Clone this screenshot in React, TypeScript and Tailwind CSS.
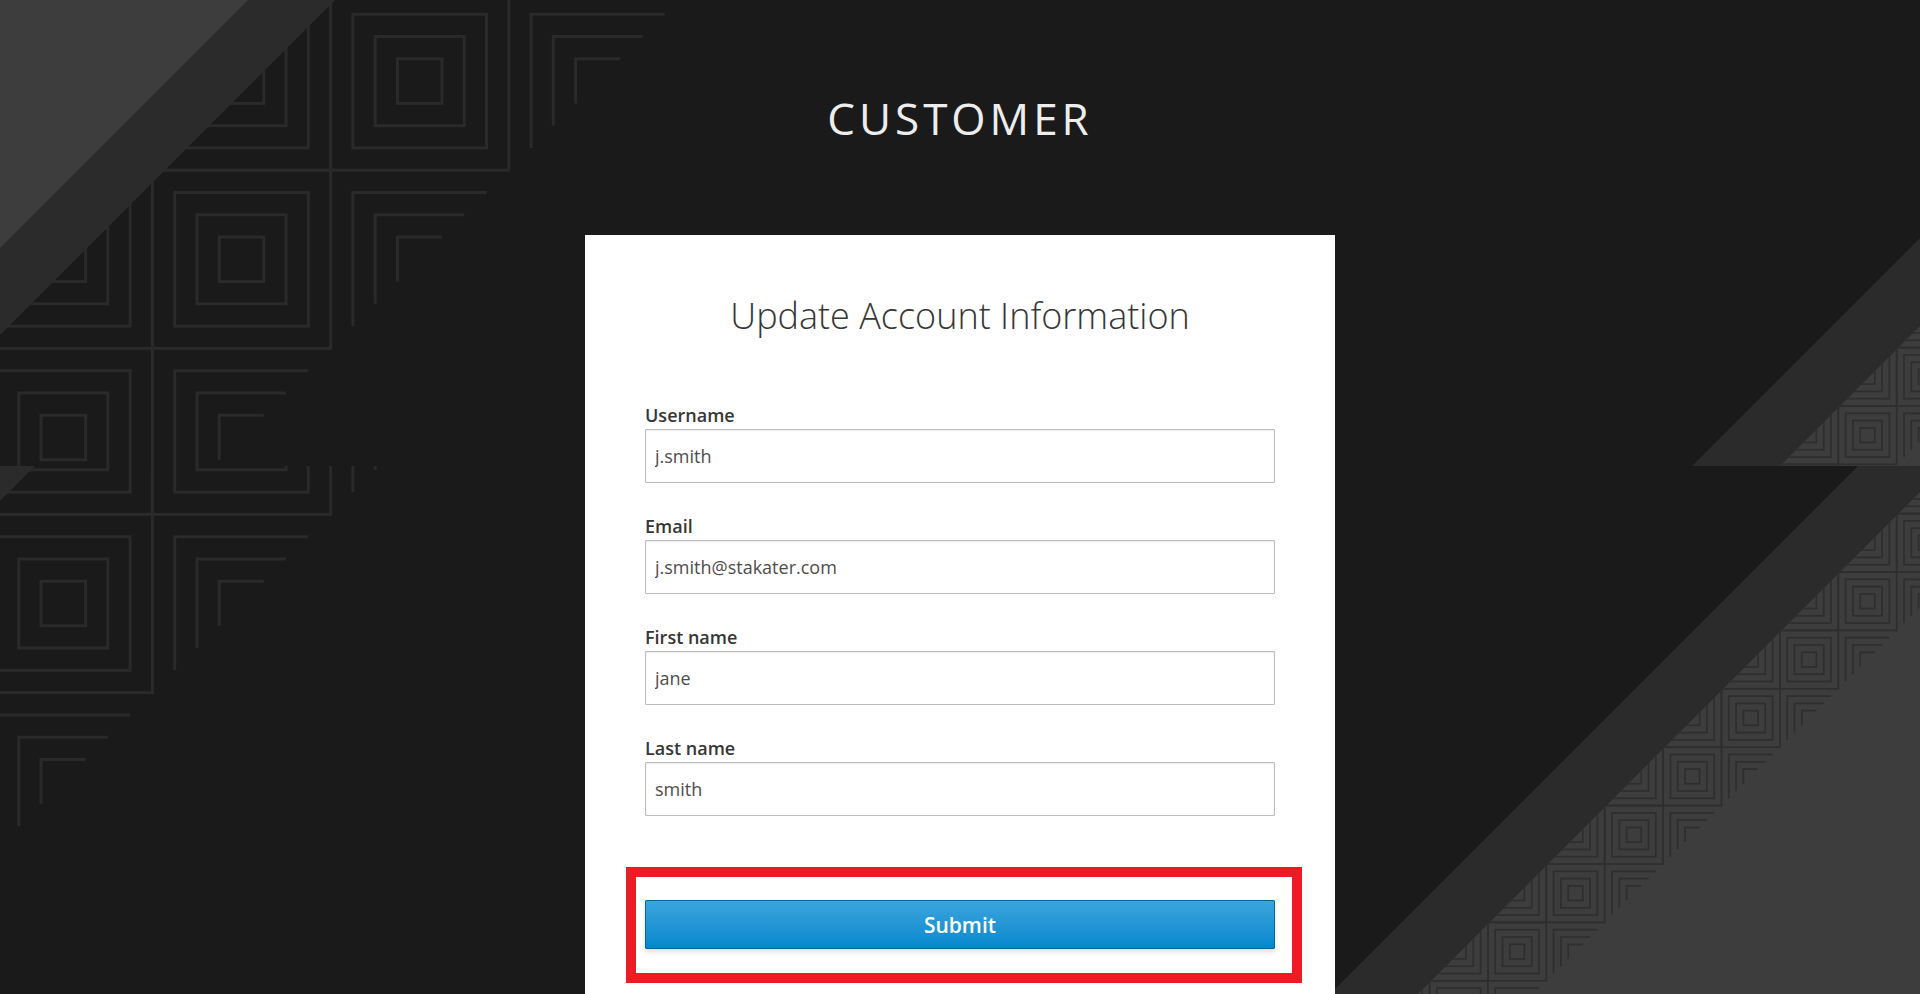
type CellProps = { x: number; y: number; size: number };

/* Closed tile: grid border plus three nested squares. */
function SquareCell({ x, y, size }: CellProps) {
  return (
    <g>
      {[0, 1, 2, 3].map((n) => {
        const inset = (size / 8) * n;
        return (
          <rect key={n} x={x + inset} y={y + inset} width={size - inset * 2} height={size - inset * 2} />
        );
      })}
    </g>
  );
}

/* Open tile on the outer edge: three nested corners. */
function CornerCell({ x, y, size }: CellProps) {
  return (
    <g>
      {[1, 2, 3].map((n) => {
        const inset = (size / 8) * n;
        const length = size - inset * 2;
        return <path key={n} d={`M${x + inset + length} ${y + inset}h${-length}v${length}`} />;
      })}
    </g>
  );
}

function Pattern({ x, y, size, from, to }: CellProps & { from: number; to: number }) {
  const steps = Array.from({ length: to - from + 1 }, (_, i) => i + from);
  return (
    <>
      {steps.map((n) => {
        const cx = x - size * n;
        const cy = y + size * n;
        return (
          <g key={n}>
            <SquareCell x={cx - size} y={cy} size={size} />
            <SquareCell x={cx} y={cy} size={size} />
            <CornerCell x={cx + size} y={cy} size={size} />
          </g>
        );
      })}
    </>
  );
}

function Artwork() {
  return (
    <>
      <g fill="none" stroke="#2a2a2a" strokeWidth="3">
        <Pattern x={330.6} y={-8} size={178.2} from={0} to={3} />
      </g>
      <path d="M-900 -900H1235L-900 1235Z" fill="#2b2b2b" />
      <path d="M-900 -900H1148L-900 1148Z" fill="#3d3d3d" />

      <path d="M2558 -400V1400H758Z" fill="#2b2b2b" />
      <clipPath id="lower-right">
        <path d="M2646 -400V1400H846Z" />
      </clipPath>
      <g clipPath="url(#lower-right)">
        <rect x="800" y="-400" width="1900" height="1900" fill="#3d3d3d" />
        <g fill="none" stroke="#2e2e2e" strokeWidth="1.7">
          <Pattern x={1838.3} y={406} size={58.4} from={-3} to={8} />
        </g>
      </g>
    </>
  );
}

function Background() {
  return (
    <svg
      className="absolute inset-0 h-full w-full"
      viewBox="0 0 1920 994"
      preserveAspectRatio="xMidYMin slice"
      aria-hidden="true"
    >
      <clipPath id="band-top">
        <rect width="1920" height="466" />
      </clipPath>
      <clipPath id="band-bottom">
        <rect y="466" width="1920" height="528" />
      </clipPath>
      <g clipPath="url(#band-top)">
        <Artwork />
      </g>
      <g clipPath="url(#band-bottom)">
        <g transform="translate(0 166)">
          <Artwork />
        </g>
      </g>
    </svg>
  );
}

const fields = [
  { id: "username", label: "Username", type: "text", value: "j.smith" },
  { id: "email", label: "Email", type: "text", value: "j.smith@stakater.com" },
  { id: "firstName", label: "First name", type: "text", value: "jane" },
  { id: "lastName", label: "Last name", type: "text", value: "smith" },
];

export default function App() {
  return (
    <div className="relative flex min-h-screen flex-col items-center overflow-hidden bg-[#1a1a1a] font-['Open_Sans',sans-serif] text-[#363636]">
      <Background />
      <header className="relative pt-[86px] pb-[85px] text-center text-[44px] leading-[64px] tracking-[4px] text-[#ededed] uppercase">
        Customer
      </header>
      <main className="relative w-full max-w-[750px] grow bg-white px-[60px] pt-14 pb-11">
        <h1 className="text-center text-4xl leading-[50px] font-light">Update Account Information</h1>
        <form className="mt-[61px]" onSubmit={(e) => e.preventDefault()}>
          <div className="flex flex-col gap-[30px]">
            {fields.map((f) => (
              <div key={f.id} className="flex flex-col">
                <label htmlFor={f.id} className="text-lg leading-[27px] font-semibold">
                  {f.label}
                </label>
                <input
                  id={f.id}
                  type={f.type}
                  defaultValue={f.value}
                  className="h-[54px] w-full rounded-[1px] border border-[#bbb] bg-white px-[9px] text-lg text-[#4d4d4d] shadow-[inset_0_1px_2px_rgba(3,3,3,0.075)] outline-none"
                />
              </div>
            ))}
          </div>
          <div className="relative mt-[84px]">
            <button
              type="submit"
              className="block h-[49px] w-full rounded-[1px] border border-[#00659c] bg-linear-to-b from-[#39a5dc] to-[#0088ce] pt-0.5 text-[21px] font-semibold text-white shadow-[0_3px_5px_rgba(3,3,3,0.12)]"
            >
              Submit
            </button>
            <div className="pointer-events-none absolute -top-[33px] -right-[27px] -bottom-[34px] -left-[19px] border-[10px] border-[#ed1c24]" />
          </div>
        </form>
      </main>
    </div>
  );
}
